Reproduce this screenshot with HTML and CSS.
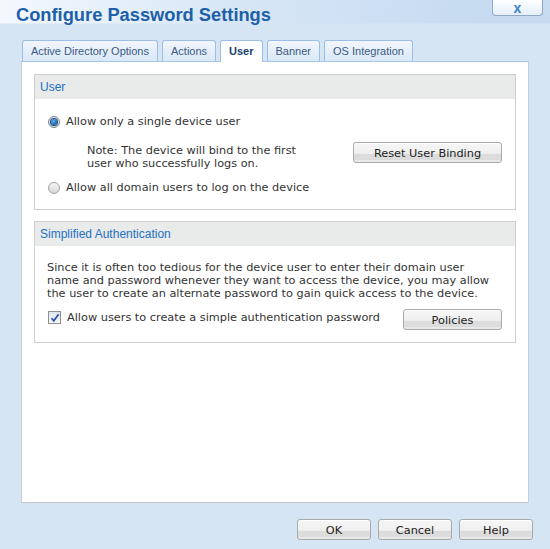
FILE: index.html
```html
<!DOCTYPE html>
<html>
<head>
<meta charset="utf-8">
<link rel="stylesheet" href="styles.css">
</head>
<body>
<div class="window">
  <header class="titlebar">
    <h1 class="title">Configure Password Settings</h1>
    <button class="close">x</button>
  </header>
  <nav class="tabs">
    <span class="tab">Active Directory Options</span>
    <span class="tab">Actions</span>
    <span class="tab tab-active">User</span>
    <span class="tab">Banner</span>
    <span class="tab">OS Integration</span>
  </nav>
  <main class="panel">
    <section class="group">
      <div class="group-head">User</div>
      <div class="group-body">
        <label class="option"><span class="radio radio-on"></span>Allow only a single device user</label>
        <div class="note-row">
          <p class="note">Note: The device will bind to the first<br>user who successfully logs on.</p>
          <button class="btn btn-reset">Reset User Binding</button>
        </div>
        <label class="option option-last"><span class="radio"></span>Allow all domain users to log on the device</label>
      </div>
    </section>
    <section class="group group-auth">
      <div class="group-head">Simplified Authentication</div>
      <div class="group-body group-body-auth">
        <p class="desc">Since it is often too tedious for the device user to enter their domain user<br>name and password whenever they want to access the device, you may allow<br>the user to create an alternate password to gain quick access to the device.</p>
        <div class="check-row">
          <label class="option"><span class="checkbox"><svg width="10" height="10" viewBox="0 0 10 10"><path d="M1.5 5.2 L3.8 7.8 L8.6 1.2" fill="none" stroke="#2c4fa6" stroke-width="1.7"/></svg></span>Allow users to create a simple authentication password</label>
          <button class="btn btn-policies">Policies</button>
        </div>
      </div>
    </section>
  </main>
  <footer class="actions">
    <button class="btn btn-foot">OK</button>
    <button class="btn btn-foot">Cancel</button>
    <button class="btn btn-foot">Help</button>
  </footer>
</div>
</body>
</html>
```
FILE: styles.css
```css
* { box-sizing: border-box; }
html, body { margin: 0; padding: 0; }
body {
  width: 550px;
  height: 549px;
  overflow: hidden;
  font-family: "DejaVu Sans", Verdana, sans-serif;
  font-size: 11.3px;
  color: #333;
  background:
    linear-gradient(to bottom, rgba(214,229,244,0) 0, rgba(214,229,244,0) 23px, #d6e5f4 24px),
    linear-gradient(100deg, #f3f8fd 0%, #d8e7f6 35%, #c8dcf1 70%, #c4d9ef 100%);
  background-color: #d6e5f4;
}
.window { width: 550px; height: 549px; }

.titlebar {
  display: flex;
  justify-content: space-between;
  align-items: flex-start;
  height: 40px;
}
.title {
  margin: 0;
  padding: 3px 0 0 16px;
  font-family: "Liberation Sans", Arial, sans-serif;
  font-size: 18.3px;
  line-height: 24px;
  font-weight: bold;
  color: #1d5fa8;
}
.close {
  width: 51px;
  height: 16px;
  margin-right: 7px;
  padding: 0;
  border: 1px solid #8fa9c6;
  border-top: none;
  border-radius: 0 0 4px 4px;
  background: linear-gradient(#fdfeff, #e6eff9);
  color: #3b82c8;
  font-family: "Liberation Sans", Arial, sans-serif;
  font-weight: bold;
  font-size: 14px;
  line-height: 12px;
}

.tabs {
  display: flex;
  gap: 4px;
  padding-left: 22px;
  height: 21px;
  position: relative;
  z-index: 1;
}
.tab {
  height: 21px;
  padding: 1px 8px 0;
  border: 1px solid #9dbde4;
  border-bottom: none;
  border-radius: 3px 3px 0 0;
  background: linear-gradient(#f1f6fc, #dae8f7);
  font-family: "Liberation Sans", Arial, sans-serif;
  font-size: 11px;
  line-height: 19px;
  color: #3a5a84;
  white-space: nowrap;
}
.tab-active {
  height: 22px;
  background: linear-gradient(#fbfdff, #ffffff);
  font-weight: bold;
  color: #1c3f6e;
}

.panel {
  margin-left: 21px;
  width: 508px;
  height: 442px;
  padding: 12px 12px 0;
  background: #fff;
  border: 1px solid #c9ced4;
  border-top-color: #a8c4e6;
  border-bottom-color: #c6c6c6;
}

.group {
  border: 1px solid #cfcfcf;
}
.group-auth { margin-top: 11px; }
.group-head {
  height: 24px;
  padding: 1px 0 0 5px;
  background: #e9eaea;
  font-family: "Liberation Sans", Arial, sans-serif;
  font-size: 12px;
  line-height: 23px;
  color: #2271c4;
}
.group-body {
  padding: 16px 13px 15px;
}
.group-body-auth {
  padding: 15px 13px 12px;
}

.option {
  display: flex;
  align-items: center;
  gap: 6px;
  line-height: 13px;
  height: 13px;
  white-space: nowrap;
}
.option-last { margin-top: 11px; }

.radio {
  width: 12px;
  height: 12px;
  border-radius: 50%;
  border: 1px solid #a3a3a3;
  background: linear-gradient(#f4f4f4, #d7d7d7);
  display: flex;
  align-items: center;
  justify-content: center;
  flex: none;
}
.radio-on {
  border-color: #7b8794;
  background: linear-gradient(#e9eef3, #c9d2db);
}
.radio-on::after {
  content: "";
  width: 6px;
  height: 6px;
  border-radius: 50%;
  background: radial-gradient(circle at 40% 35%, #5fb1ee, #1763ad 70%);
  box-shadow: 0 0 0 1px #294e74;
}

.checkbox {
  width: 13px;
  height: 13px;
  border: 1px solid #8e8f8f;
  background: linear-gradient(#dfe6ef, #f5f8fb);
  display: flex;
  align-items: center;
  justify-content: center;
  flex: none;
}

.note-row {
  display: flex;
  align-items: flex-start;
  justify-content: space-between;
  margin-top: 15px;
}
.note {
  margin: 1px 0 0 39px;
  line-height: 13px;
  white-space: nowrap;
}
.btn-reset { margin-top: -1px; }

.desc {
  margin: 0 0 0 -1px;
  line-height: 13px;
  white-space: nowrap;
}
.check-row {
  display: flex;
  align-items: flex-start;
  justify-content: space-between;
  margin-top: 11px;
}

.btn {
  height: 21px;
  padding: 2px 0 0;
  border: 1px solid #a9a9a9;
  border-radius: 3px;
  background: linear-gradient(#f6f6f6 0, #efefef 55%, #dcdcdc 57%, #dcdcdc 88%, #e8e8e8 90%);
  box-shadow: inset 0 1px 0 #fff;
  font-family: "DejaVu Sans", Verdana, sans-serif;
  font-size: 11.3px;
  line-height: 17px;
  color: #222;
  text-align: center;
}
.btn-reset { width: 149px; }
.btn-policies { width: 99px; margin-top: -2px; }

.actions {
  display: flex;
  justify-content: flex-end;
  gap: 7px;
  padding: 16px 17px 0 0;
}
.btn-foot { width: 74px; }
```
